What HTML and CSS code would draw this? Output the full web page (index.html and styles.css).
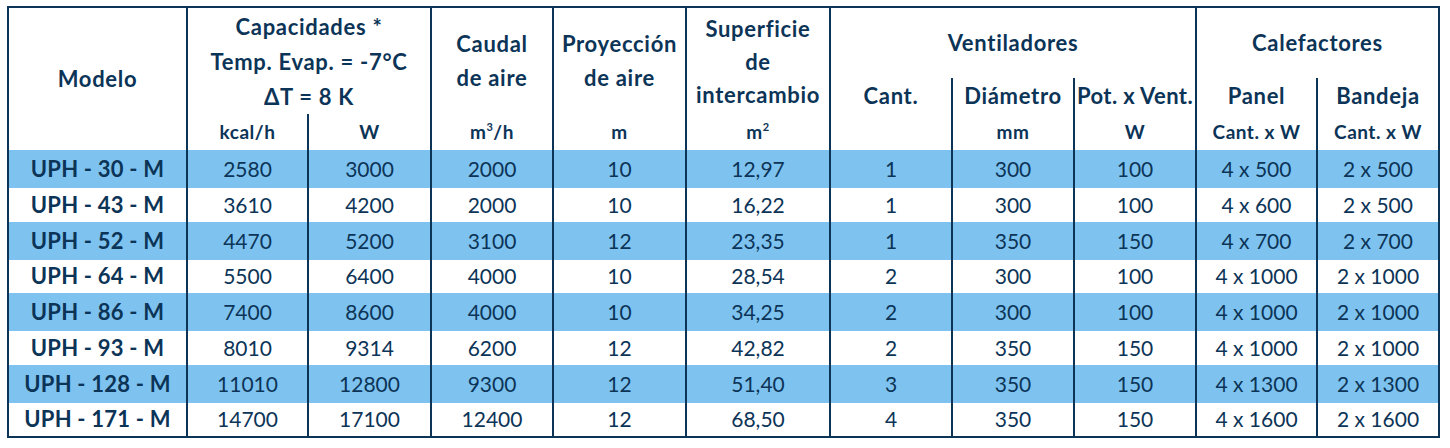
FILE: index.html
```html
<!DOCTYPE html>
<html lang="es">
<head>
<meta charset="utf-8">
<title>UPH - M</title>
<link rel="stylesheet" href="styles.css">
</head>
<body>
<table class="spec">
  <colgroup>
    <col class="w1"><col class="w2"><col class="w3"><col class="w4"><col class="w5"><col class="w6">
    <col class="w7"><col class="w8"><col class="w9"><col class="w10"><col class="w11">
  </colgroup>
  <thead>
    <tr class="ha">
      <th rowspan="3" class="mod">Modelo</th>
      <th colspan="2" rowspan="2" class="cap">Capacidades *<br>Temp. Evap. = -7°C<br>ΔT = 8 K</th>
      <th rowspan="2" class="two">Caudal<br>de aire</th>
      <th rowspan="2" class="two">Proyección<br>de aire</th>
      <th rowspan="2" class="sup3">Superficie<br>de<br>intercambio</th>
      <th colspan="3">Ventiladores</th>
      <th colspan="2">Calefactores</th>
    </tr>
    <tr class="hb">
      <th>Cant.</th>
      <th>Diámetro</th>
      <th class="tight">Pot. x Vent.</th>
      <th>Panel</th>
      <th>Bandeja</th>
    </tr>
    <tr class="hc">
      <th>kcal/h</th>
      <th>W</th>
      <th>m<sup>3</sup>/h</th>
      <th>m</th>
      <th>m<sup>2</sup></th>
      <th></th>
      <th>mm</th>
      <th>W</th>
      <th>Cant. x W</th>
      <th>Cant. x W</th>
    </tr>
  </thead>
  <tbody>
    <tr class="blue"><td class="mod">UPH - 30 - M</td><td>2580</td><td>3000</td><td>2000</td><td>10</td><td>12,97</td><td>1</td><td>300</td><td>100</td><td>4 x 500</td><td>2 x 500</td></tr>
    <tr class="white"><td class="mod">UPH - 43 - M</td><td>3610</td><td>4200</td><td>2000</td><td>10</td><td>16,22</td><td>1</td><td>300</td><td>100</td><td>4 x 600</td><td>2 x 500</td></tr>
    <tr class="blue"><td class="mod">UPH - 52 - M</td><td>4470</td><td>5200</td><td>3100</td><td>12</td><td>23,35</td><td>1</td><td>350</td><td>150</td><td>4 x 700</td><td>2 x 700</td></tr>
    <tr class="white"><td class="mod">UPH - 64 - M</td><td>5500</td><td>6400</td><td>4000</td><td>10</td><td>28,54</td><td>2</td><td>300</td><td>100</td><td>4 x 1000</td><td>2 x 1000</td></tr>
    <tr class="blue"><td class="mod">UPH - 86 - M</td><td>7400</td><td>8600</td><td>4000</td><td>10</td><td>34,25</td><td>2</td><td>300</td><td>100</td><td>4 x 1000</td><td>2 x 1000</td></tr>
    <tr class="white"><td class="mod">UPH - 93 - M</td><td>8010</td><td>9314</td><td>6200</td><td>12</td><td>42,82</td><td>2</td><td>350</td><td>150</td><td>4 x 1000</td><td>2 x 1000</td></tr>
    <tr class="blue"><td class="mod">UPH - 128 - M</td><td>11010</td><td>12800</td><td>9300</td><td>12</td><td>51,40</td><td>3</td><td>350</td><td>150</td><td>4 x 1300</td><td>2 x 1300</td></tr>
    <tr class="white"><td class="mod">UPH - 171 - M</td><td>14700</td><td>17100</td><td>12400</td><td>12</td><td>68,50</td><td>4</td><td>350</td><td>150</td><td>4 x 1600</td><td>2 x 1600</td></tr>
  </tbody>
</table>
</body>
</html>
```
FILE: styles.css
```css
html, body {
  margin: 0;
  padding: 0;
  background: #ffffff;
}

body {
  font-family: "Lato", "Liberation Sans", sans-serif;
  color: #0c3457;
  font-variant-ligatures: none;
}

.spec {
  margin: 6px 0 0 7px;
  border: 2px solid #0c3457;
  border-collapse: separate;
  border-spacing: 0;
  table-layout: fixed;
  width: 1433px;
}

.w1 { width: 177px; }
.w2 { width: 121px; }
.w3 { width: 123px; }
.w4 { width: 122px; }
.w5 { width: 133px; }
.w6 { width: 144px; }
.w7 { width: 122px; }
.w8 { width: 122px; }
.w9 { width: 122px; }
.w10 { width: 121px; }
.w11 { width: 122px; }

.spec th,
.spec td {
  padding: 0;
  text-align: center;
  vertical-align: middle;
  border-left: 2px solid #0c3457;
  white-space: nowrap;
  box-sizing: border-box;
  overflow: visible;
}

.spec .mod {
  border-left: 0;
}

.spec th {
  font-weight: 700;
  font-size: 22px;
  letter-spacing: 0.7px;
  line-height: 34px;
}

.spec th.tight {
  letter-spacing: 0.4px;
}

.spec .cap {
  line-height: 35px;
}

.spec .sup3 {
  line-height: 33px;
}

.ha { height: 70px; }
.hb { height: 36px; }
.hc { height: 36px; }

.hc th {
  font-size: 19px;
  letter-spacing: 0.5px;
  line-height: 36px;
}

.hc sup {
  font-size: 11px;
  line-height: 0;
  vertical-align: 8px;
}

.spec td {
  font-size: 21px;
  line-height: 30px;
}

.spec td.mod {
  font-weight: 700;
  font-size: 22px;
  letter-spacing: 0.2px;
}

.blue { height: 38px; background: #7ec3ef; }
.white { height: 33.5px; background: #ffffff; }
```
